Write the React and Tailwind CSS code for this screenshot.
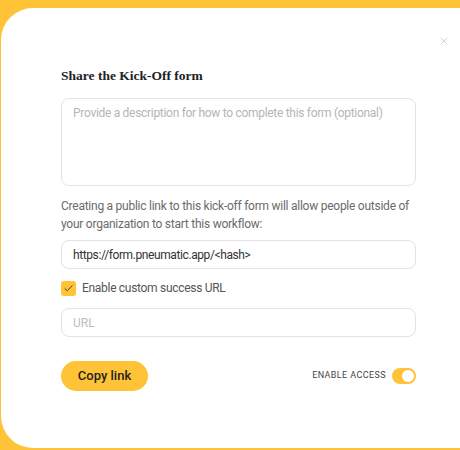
import { Check, X } from "lucide-react";

const App = () => {
	return (
		<div className="h-[450px] w-[460px] overflow-hidden bg-[#fec336] pt-[8px] pl-[1px]">
			<div
				className="relative h-[440px] w-[490px] rounded-[32px] bg-white pt-[58px] pl-[60px]"
				style={{ fontFamily: "Roboto, 'Open Sans', sans-serif" }}
			>
				<X className="absolute top-[27px] left-[437px] h-[12px] w-[12px] text-[#c8c8c8]" strokeWidth={1.5} />
				<div className="flex w-[355px] flex-col">
					<h2
						className="text-[13.5px] leading-[20px] font-bold text-[#222]"
						style={{ fontFamily: "'Liberation Serif', serif" }}
					>
						Share the Kick-Off form
					</h2>
					<textarea
						className="mt-[12px] h-[88px] w-full resize-none rounded-[8px] border border-[#e3e3e3] px-[11px] py-[4px] text-[12px] leading-[20px] tracking-[-0.3px] text-[#333] outline-none placeholder:text-[#b5b5b5]"
						placeholder="Provide a description for how to complete this form (optional)"
					/>
					<p className="mt-[11px] text-[12px] leading-[18px] tracking-[-0.25px] text-[#6b6b6b]">
						Creating a public link to this kick-off form will allow people outside of your organization to start this workflow:
					</p>
					<div className="mt-[7px] flex h-[29px] items-center rounded-[8px] border border-[#e3e3e3] px-[11px] text-[12px] tracking-[-0.4px] text-[#333]">
						https://form.pneumatic.app/&lt;hash&gt;
					</div>
					<label className="mt-[10px] flex items-center gap-[6px] text-[12px] tracking-[-0.3px] text-[#555]">
						<span className="flex h-[15px] w-[15px] items-center justify-center rounded-[3px] bg-[#fec336]">
							<Check className="h-[11px] w-[11px] text-[#3a3a3a]" strokeWidth={2} />
						</span>
						Enable custom success URL
					</label>
					<div className="mt-[11px] flex h-[29px] items-center rounded-[8px] border border-[#e3e3e3] px-[11px] text-[12px] text-[#bdbdbd]">
						URL
					</div>
					<div className="mt-[24px] flex items-center justify-between">
						<button className="h-[30px] w-[87px] rounded-full bg-[#fec336] text-[13px] font-medium text-[#222]">
							Copy link
						</button>
						<div className="flex items-center gap-[6px]">
							<span className="text-[9px] tracking-[0.4px] text-[#444]">ENABLE ACCESS</span>
							<span className="flex h-[16px] w-[24px] items-center justify-end rounded-full bg-[#fec336] pr-[2px]">
								<span className="h-[12px] w-[12px] rounded-full bg-white" />
							</span>
						</div>
					</div>
				</div>
			</div>
		</div>
	);
};

export default App;
